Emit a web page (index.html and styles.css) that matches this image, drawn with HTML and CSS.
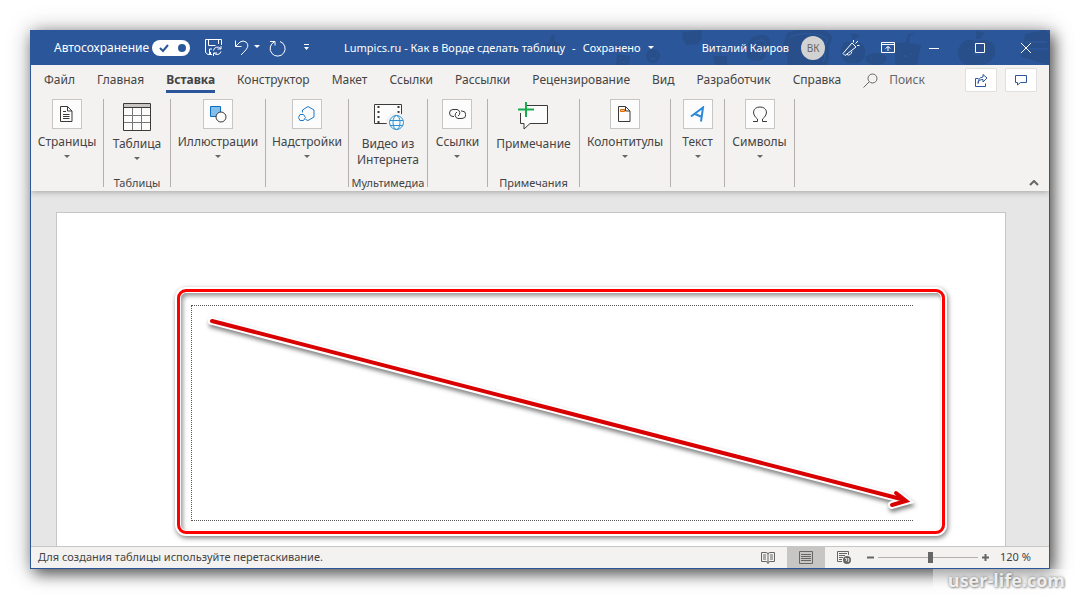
FILE: index.html
```html
<!DOCTYPE html>
<html lang="ru">
<head>
<meta charset="utf-8">
<meta name="viewport" content="width=device-width, initial-scale=1">
<title>Lumpics.ru - Как в Ворде сделать таблицу</title>
<link rel="stylesheet" href="styles.css">
</head>
<body>
<div class="window">
  <header class="titlebar">
    <svg class="doodles" width="512" height="35" viewBox="0 0 512 35" aria-hidden="true">
      <g class="doodle">
        <path d="M6 14l5-1 2-7 3-2 1 8 5 1-1 6H7z"/>
        <path d="M79 24l13 2-1 9H78z"/>
        <circle cx="115" cy="26" r="7"/>
        <path d="M145 2l18-2 1 7-4 7-12 1-4-7z"/>
        <path d="M175 26h14v9h-12z"/>
        <path d="M210 15c0-10 20-14 22-5 2 9-4 9-5 17-3 6-19 4-18-2z"/>
        <path d="M249 3c18-8 48-5 45 7-7 10 1 17-6 25h-39c3-10-5-16-3-23z"/>
        <path d="M305 14c-6 10 1 22 10 19 10 3 15-9 11-17-4-6-12-3-12-3s-6-4-9 1zM315 11l-2-8 9 2z"/>
        <ellipse cx="338" cy="29" rx="11" ry="6"/>
        <path d="M357 13l11-1 2-8 8-1-6 3-1 7 12 2-4 20h-22z"/>
        <path d="M424 13c-9 10-1 26 12 22 15 3 25-10 20-20-5-8-17-4-17-4s-10-4-15 2zM438 9V1l8 2-4 6z"/>
        <path d="M487 4l20-4 5 4v31l-29-8z"/>
      </g>
      <g class="face"><path d="M112 28q3 3 6 0M111 24h1M118 24h1M82 29h1M88 30h1M84 32h3M252 7c11-5 33-5 38 3-9 10 0 13-5 22M214 17c4-9 14-9 14-2l-6 11M430 19h1M448 19h1M436 23q4 4 8 0M362 23h1M373 24h1M366 26h3M333 28h1M343 30h1M487 12h22M485 19h25"/></g>
    </svg>
    <div class="quick">
      <label class="autosave"><span>Автосохранение</span><input class="autosave-input" type="checkbox" checked><span class="switch"><svg width="38" height="16" viewBox="0 0 38 16"><path class="tick" d="M8 8l3 3 5-6"/><circle class="knob" cx="30" cy="8" r="4"/></svg></span></label>
      <button class="quick-button save" aria-label="Сохранить"><svg width="17" height="17" viewBox="0 0 17 17"><path d="M7 15.500H3l-2.500-2V.5h16V6M3.500.5v6h7M13.500.5V5M4.500 15v-5H7M5.500 13v2"/><path d="M8.500 11.500a4 4 0 0 1 7-2M16 7v3h-3.500M16 12.500a4 4 0 0 1-7 1.500M8.500 17v-3H12"/></svg></button>
      <button class="quick-button undo" aria-label="Отменить"><svg width="26" height="18" viewBox="0 0 26 18"><path d="M1.500 1.500v6h6M2 7l4-4q3-2 6 0c4 4 1 7-5 13"/><path class="solid" d="M20 6h6l-3 3z"/></svg></button>
      <button class="quick-button redo" aria-label="Повторить"><svg width="18" height="18" viewBox="0 0 18 18"><path d="M2 2.500h5v4M6.500 2.800A7.500 7.500 0 1 0 12 2.500"/></svg></button>
      <button class="quick-button more" aria-label="Настройка панели"><svg width="7" height="7" viewBox="0 0 7 7"><path d="M1 .5h5"/><path class="solid" d="M1 3h5L3.500 6z"/></svg></button>
    </div>
    <div class="document-title"><span>Lumpics.ru - Как в Ворде сделать таблицу</span><span>-</span><span>Сохранено</span><svg width="6" height="3" viewBox="0 0 6 3"><path class="solid" d="M0 0h6L3 3z"/></svg></div>
    <div class="account">
      <span class="user-name">Виталий Каиров</span>
      <span class="avatar">ВК</span>
      <button class="title-button narrow" aria-label="Новости"><svg width="18" height="18" viewBox="0 0 18 18"><path d="M1 14.500L10 4l4 4-11 8.500zM5 15.500q3 2 5-3M11.500 3.500V1M13.500 4.500L16 2M15 6.500h2.500"/></svg></button>
      <button class="title-button" aria-label="Параметры ленты"><svg width="14" height="11" viewBox="0 0 14 11"><path d="M.5.5h13v10H.5zM.5 2.500h13M7 9V4.500M4.500 6.500L7 4.500l2.500 2"/></svg></button>
      <button class="title-button" aria-label="Свернуть"><svg width="10" height="10" viewBox="0 0 10 10"><path d="M0 5.500h10"/></svg></button>
      <button class="title-button" aria-label="Развернуть"><svg width="10" height="10" viewBox="0 0 10 10"><path d="M.5.5h9v9h-9z"/></svg></button>
      <button class="title-button" aria-label="Закрыть"><svg width="10" height="10" viewBox="0 0 10 10"><path d="M0 0l10 10M10 0L0 10"/></svg></button>
    </div>
  </header>

  <nav class="tabs">
    <button class="tab">Файл</button>
    <button class="tab">Главная</button>
    <button class="tab active">Вставка</button>
    <button class="tab">Конструктор</button>
    <button class="tab">Макет</button>
    <button class="tab">Ссылки</button>
    <button class="tab">Рассылки</button>
    <button class="tab">Рецензирование</button>
    <button class="tab">Вид</button>
    <button class="tab">Разработчик</button>
    <button class="tab">Справка</button>
    <button class="tab search"><svg width="15" height="15" viewBox="0 0 15 15"><circle cx="9.500" cy="5.500" r="4.500"/><path d="M6 9l-5.500 5.500"/></svg>Поиск</button>
    <div class="tab-actions">
      <button class="action" aria-label="Поделиться"><svg width="13" height="13" viewBox="0 0 13 13"><path d="M3.500 4.500h-3v8h10v-3M3 9.500c.5-3 2-4 5-4v2.500l4-4-4-3.500v2.500q-5 .5-5 6.500"/></svg></button>
      <button class="action" aria-label="Примечания"><svg width="12" height="11" viewBox="0 0 12 11"><path d="M.5.500h11v7H5.500L2.500 10V7.500h-2z"/></svg></button>
    </div>
  </nav>

  <section class="ribbon">
    <div class="group"><button class="tool"><span class="tile"><svg width="13" height="16" viewBox="0 0 13 16"><path class="ink paper" d="M.5.500h7l4.500 4.500v10.500H.5zM7.500.500V5H12"/><path class="ink" d="M3 5.500h3M3 8.500h6.500M3 10.500h6.500M3 12.500h6.500"/></svg></span>Страницы<i class="caret"></i></button></div>
    <div class="group"><button class="tool large"><span class="picture"><svg width="28" height="28" viewBox="0 0 28 28"><path class="paper" d="M0 0h28v28H0z"/><path class="gray" d="M1 1h26v3H1z"/><path class="line" d="M9.500 5v22M18.500 5v22M1 12.500h26M1 19.500h26"/><path class="ink" d="M.5.500h27v27H.5zM1 4.500h26"/></svg></span>Таблица<i class="caret"></i></button><span class="group-name">Таблицы</span></div>
    <div class="group"><button class="tool"><span class="tile"><svg width="17" height="17" viewBox="0 0 17 17"><path class="shape" d="M.5.500h10v10H.5z"/><circle class="ink paper" cx="11" cy="11" r="5"/></svg></span>Иллюстрации<i class="caret"></i></button></div>
    <div class="group"><button class="tool"><span class="tile"><svg width="17" height="17" viewBox="0 0 17 17"><path class="blue" d="M4.500 6.500V4l5.500-3.500L16 4v7l-6 3.500-2.500-1M2 8.500h3.500l2 3-2 3H2l-1.500-3z"/></svg></span>Надстройки<i class="caret"></i></button></div>
    <div class="group"><button class="tool large"><span class="picture"><svg class="video" width="31" height="28" viewBox="0 0 31 28"><path class="ink paper" d="M.5 1.500h27v19H.5z"/><path class="film" d="M4.500 3v18M24.500 3v18"/><circle class="halo" cx="22.500" cy="19.500" r="9"/><circle class="globe" cx="22.500" cy="19.500" r="7"/><ellipse class="globe" cx="22.500" cy="19.500" rx="3.500" ry="7"/><path class="globe" d="M16 17.500h13M16 22.500h13"/></svg></span>Видео из<br>Интернета</button><span class="group-name">Мультимедиа</span></div>
    <div class="group"><button class="tool"><span class="tile"><svg width="17" height="12" viewBox="0 0 17 12"><path class="ink" d="M5 8.500H4a3.500 3.500 0 1 1 0-7h4a3.500 3.500 0 0 1 1 6.500M12 3h1a3.500 3.500 0 0 1 0 7.500H9A3.500 3.500 0 0 1 8 4"/></svg></span>Ссылки<i class="caret"></i></button></div>
    <div class="group"><button class="tool large"><span class="picture comment"><svg width="31" height="29" viewBox="0 0 31 29"><path class="ink paper" d="M2.500 3.500h27v18H12l-6 5.500v-5.500H2.500z"/><path class="erase" d="M2 0h7v11H2zM0 5h11v5H0z"/><path class="green" d="M8 0v15M0 7.500h16"/></svg></span>Примечание</button><span class="group-name">Примечания</span></div>
    <div class="group"><button class="tool"><span class="tile"><svg width="13" height="16" viewBox="0 0 13 16"><path class="ink paper" d="M.5.500h7l4.500 4.500v10.500H.5zM7.500.500V5H12"/><path class="orange" d="M2.500 3.500h4v2h-4z"/></svg></span>Колонтитулы<i class="caret"></i></button></div>
    <div class="group"><button class="tool"><span class="tile"><svg width="15" height="17" viewBox="0 0 15 17"><path class="letter" d="M1 10.500L13 1.500l-2 14M5 8l7 3"/></svg></span>Текст<i class="caret"></i></button></div>
    <div class="group"><button class="tool"><span class="tile"><svg width="16" height="17" viewBox="0 0 16 17"><path class="ink" d="M1 15.500h4.500V13C-1 8 1 1 8 1s9 7 2.500 12v2.500H15"/></svg></span>Символы<i class="caret"></i></button></div>
    <button class="collapse" aria-label="Свернуть ленту"><svg width="10" height="6" viewBox="0 0 10 6"><path d="M1 5l4-4 4 4"/></svg></button>
  </section>

  <main class="workspace">
    <article class="page">
      <div class="table-outline"></div>
      <div class="highlight"></div>
      <svg class="arrow" width="704" height="200" viewBox="0 0 704 200" aria-hidden="true"><path class="arrow-edge" d="M5 9L694 187M689 181l10 8-14 4"/><path class="arrow-core" d="M5 9L694 187"/><path class="arrow-core tip" d="M689 181l10 8-14 4"/></svg>
    </article>
  </main>

  <footer class="status">
    <span class="hint">Для создания таблицы используйте перетаскивание.</span>
    <button class="view" aria-label="Режим чтения"><svg width="14" height="13" viewBox="0 0 14 13"><path d="M.5 1.500H5l2 1 2-1h4.500v9H9l-2 1-2-1H.5zM7 2v11M2 4h3M2 6h3M2 8h3M9 4h3M9 6h3M9 8h3"/></svg></button>
    <button class="view current" aria-label="Разметка страницы"><svg width="14" height="13" viewBox="0 0 14 13"><path d="M.5.500h13v12H.5zM2 3.500h10M2 5.500h10M2 7.500h10M2 9.500h10"/></svg></button>
    <button class="view" aria-label="Веб-документ"><svg width="14" height="13" viewBox="0 0 14 13"><path d="M5 10.500H.5V.500h11V4M2 2.500h8M2 4.500h6M2 6.500h4M2 8.500h3"/><circle class="solid" cx="10" cy="9" r="4"/><path class="gap" d="M8 7l2 1-1 2M11 7l1 2-1 2"/></svg></button>
    <div class="zoom">
      <button class="zoom-step" aria-label="Уменьшить"><svg width="7" height="7" viewBox="0 0 7 7"><path d="M0 3.500h7"/></svg></button>
      <input class="zoom-slider" type="range" min="10" max="220" value="120" aria-label="Масштаб">
      <button class="zoom-step" aria-label="Увеличить"><svg width="7" height="7" viewBox="0 0 7 7"><path d="M0 3.500h7M3.500 0v7"/></svg></button>
    </div>
    <span class="zoom-value">120 %</span>
  </footer>
</div>
<div class="watermark">user-life.com</div>
</body>
</html>
```
FILE: styles.css
```css
* { box-sizing: border-box; }
body {
  margin: 0;
  min-height: 100vh;
  padding: 30px;
  display: flex;
  background: #fff;
  color: #444;
  font: 12px/16px "Noto Sans", "Open Sans", sans-serif;
}
button {
  margin: 0;
  padding: 0;
  border: 0;
  background: none;
  color: inherit;
  font: inherit;
}
svg { display: block; fill: none; stroke: currentColor; flex: none; }
.solid { fill: currentColor; stroke: none; }

.window {
  flex: 1;
  min-width: 0;
  display: flex;
  flex-direction: column;
  border: 1px solid #2b579a;
  border-top: 0;
  box-shadow: 4px 5px 14px rgba(0, 0, 0, .6), 0 0 22px rgba(0, 0, 0, .25);
}

.titlebar {
  position: relative;
  height: 35px;
  display: grid;
  grid-template-columns: 313px 1fr auto;
  align-items: center;
  background: #2b579a;
  color: #fff;
}
.doodles { position: absolute; top: 0; right: -1px; }
.doodle { fill: #284f89; stroke: none; }
.face { stroke: #2e5c9f; }
.quick, .document-title, .account { position: relative; display: flex; align-items: center; }
.quick { padding-left: 23px; }
.autosave { display: flex; align-items: center; gap: 3px; margin-right: 15px; }
.autosave-input { position: absolute; opacity: 0; width: 1px; height: 1px; margin: 0; }
.switch { border-radius: 8px; background: #fff; color: #2b579a; }
.tick { stroke-width: 2; }
.knob { fill: #2b579a; stroke: none; }
.quick-button { display: flex; justify-content: center; }
.save { margin-right: 12px; }
.undo { margin-right: 8px; }
.redo { margin-right: 17px; }
.document-title { gap: 7px; font-size: 11px; white-space: nowrap; }
.user-name { margin-right: 12px; font-size: 11px; white-space: nowrap; }
.avatar {
  width: 24px;
  height: 24px;
  border-radius: 50%;
  background: #d2d2d2;
  color: #666;
  font-size: 10px;
  line-height: 24px;
  text-align: center;
}
.title-button { width: 46px; height: 35px; display: flex; align-items: center; justify-content: center; }
.title-button.narrow { width: 40px; padding-left: 12px; }

.tabs {
  height: 33px;
  padding: 0 12px 3px 2px;
  display: flex;
  align-items: center;
  background: #f3f2f1;
}
.tab { height: 26px; padding: 0 11px; white-space: nowrap; }
.tab.active {
  font-weight: 700;
  background: linear-gradient(#2b579a, #2b579a) center bottom / calc(100% - 22px) 3px no-repeat;
}
.search { display: flex; align-items: center; gap: 11px; color: #666; }
.tab-actions { margin-left: auto; display: flex; gap: 8px; }
.action {
  width: 32px;
  height: 24px;
  display: flex;
  align-items: center;
  justify-content: center;
  border: 1px solid #e1dfdd;
  border-radius: 2px;
  background: #fff;
  color: #2b579a;
}

.ribbon {
  position: relative;
  z-index: 1;
  display: grid;
  grid-template-columns: 73px 67px 95px 83px 79px 60px 92px 91px 54px 70px 1fr;
  height: 93px;
  padding: 1px 0 4px;
  background: #f3f2f1;
  box-shadow: 0 1px 6px rgba(0, 0, 0, .3);
  clip-path: inset(0 0 -10px 0);
}
.group {
  display: flex;
  flex-direction: column;
  align-items: center;
  justify-content: space-between;
  border-right: 1px solid #b3b0ad;
  white-space: nowrap;
}
.tool { display: flex; flex-direction: column; align-items: center; }
.tile {
  width: 30px;
  height: 30px;
  margin-bottom: 5px;
  display: flex;
  align-items: center;
  justify-content: center;
  border: 1px solid #c8c6c4;
  background: #fcfcfc;
}
.picture { height: 37px; padding-top: 4px; }
.picture.comment { padding-top: 3px; }
.video { margin-left: 3px; }
.group-name { font-size: 11px; line-height: 8px; }
.caret {
  margin-top: 5px;
  border: 3px solid transparent;
  border-top-color: #666;
  border-bottom: 0;
}
.ink { stroke: #3b3a39; }
.paper { fill: #fcfcfc; }
.picture .paper:not(.ink) { stroke: none; }
.gray { fill: #c8c6c4; stroke: none; }
.line { stroke: #797775; }
.shape { fill: #83beec; stroke: #0f6cbd; }
.blue { stroke: #1e78c8; }
.film { stroke: #3b3a39; stroke-width: 2; stroke-dasharray: 2 3; }
.globe { stroke: #2f8fcf; }
.halo { fill: #f3f9fd; stroke: #f3f2f1; stroke-width: 2; }
.erase { fill: #f3f2f1; stroke: none; }
.green { stroke: #18ab50; stroke-width: 2; }
.orange { fill: #f9c499; stroke: #e06c00; }
.letter { stroke: #2b88d8; stroke-width: 2; }
.collapse { align-self: end; justify-self: end; margin: 0 10px 1px 0; color: #666; }
.collapse svg { stroke-width: 2; }

.workspace {
  flex: 1;
  display: flex;
  padding: 21px 43px 0 25px;
  overflow: hidden;
  background: #e6e6e6;
}
.page {
  position: relative;
  flex: 1;
  padding: 92px 92px 25px 134px;
  display: flex;
  border: 1px solid #c6c6c6;
  border-bottom: 0;
  background: #fff;
}
.table-outline { flex: 1; border: 1px dotted #555; border-right: 0; }
.highlight {
  position: absolute;
  inset: 76px 60px 12px 120px;
  border: 3px solid #f00;
  border-radius: 9px;
  box-shadow: 0 0 0 2px #fff, inset 0 0 0 1px #fff, 1px 2px 5px 2px rgba(0, 0, 0, .5), inset 2px 3px 4px 1px rgba(0, 0, 0, .4);
}
.arrow { position: absolute; top: 99px; left: 150px; overflow: visible; filter: drop-shadow(1px 3px 2px rgba(0, 0, 0, .5)); }
.arrow path { stroke-linecap: round; }
.arrow-edge { stroke: #fff; stroke-width: 8; }
.arrow-core { stroke: #d90000; stroke-width: 4; }

.status {
  height: 22px;
  display: flex;
  align-items: stretch;
  border-top: 1px solid #c6c6c6;
  background: #f3f2f1;
  font-size: 11px;
  line-height: 20px;
}
.hint { flex: 1; padding-left: 7px; white-space: nowrap; }
.view { width: 38px; display: flex; align-items: center; justify-content: center; color: #666; }
.current { background: #c8c6c4; }
.gap { stroke: #f3f2f1; }
.zoom { display: flex; align-items: center; gap: 4px; padding: 0 11px 0 4px; color: #666; }
.zoom-step svg { stroke-width: 2; }
.zoom-slider {
  width: 100px;
  height: 11px;
  margin: 0;
  appearance: none;
  background: linear-gradient(#b3b0ad, #b3b0ad) center / 100% 1px no-repeat;
}
.zoom-slider::-webkit-slider-thumb { appearance: none; width: 5px; height: 11px; background: #666; }
.zoom-value { width: 49px; }

.watermark {
  position: absolute;
  right: 0;
  bottom: 8px;
  padding: 0 15px;
  background: rgba(255, 255, 255, .4);
  color: #eee;
  font: 700 18px/22px "Open Sans", sans-serif;
  text-shadow: 0 0 3px rgba(0, 0, 0, .4), 1px 1px 2px rgba(0, 0, 0, .3);
}
```
